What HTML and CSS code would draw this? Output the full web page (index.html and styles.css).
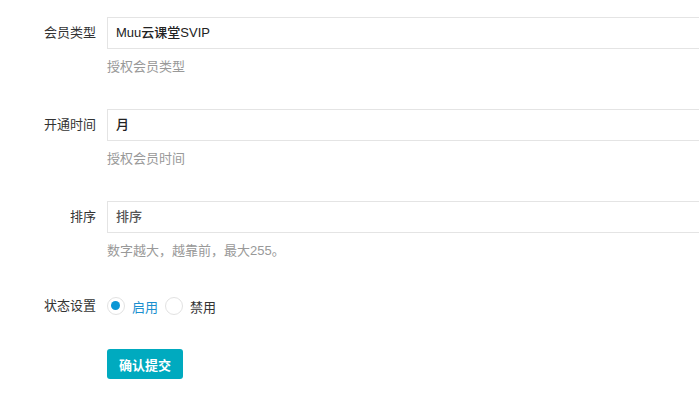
FILE: index.html
```html
<!DOCTYPE html>
<html lang="zh">
<head>
<meta charset="utf-8">
<link rel="stylesheet" href="styles.css">
</head>
<body>
<form class="form">
  <div class="row">
    <label class="label">会员类型</label>
    <div class="field">
      <div class="input">Muu云课堂SVIP</div>
      <div class="help">授权会员类型</div>
    </div>
  </div>
  <div class="row">
    <label class="label">开通时间</label>
    <div class="field">
      <div class="input">月</div>
      <div class="help">授权会员时间</div>
    </div>
  </div>
  <div class="row">
    <label class="label">排序</label>
    <div class="field">
      <div class="input placeholder">排序</div>
      <div class="help">数字越大，越靠前，最大255。</div>
    </div>
  </div>
  <div class="row row-radio">
    <label class="label">状态设置</label>
    <div class="field radios">
      <span class="radio checked"><span class="dot"></span></span>
      <span class="radio-text active">启用</span>
      <span class="radio"></span>
      <span class="radio-text">禁用</span>
    </div>
  </div>
  <div class="row row-btn">
    <span class="label"></span>
    <div class="field">
      <button type="button" class="btn">确认提交</button>
    </div>
  </div>
</form>
</body>
</html>
```
FILE: styles.css
```css
html, body {
  margin: 0;
  padding: 0;
  background: #fff;
}
body {
  font-family: "Liberation Sans", "Noto Sans CJK SC", sans-serif;
  font-size: 13px;
  color: #333;
}
.form {
  padding-top: 17px;
}
.row {
  display: flex;
  align-items: flex-start;
  margin-bottom: 32px;
}
.label {
  width: 96px;
  flex: none;
  text-align: right;
  padding-right: 11px;
  line-height: 32px;
  color: #333;
}
.field {
  flex: 1;
  min-width: 0;
}
.input {
  height: 30px;
  border: 1px solid #e4e4e4;
  border-right: 0;
  padding: 0 8px;
  line-height: 30px;
  color: #222;
  font-weight: 500;
}
.input.placeholder {
  color: #555;
}
.help {
  margin-top: 8px;
  line-height: 20px;
  color: #999;
}
.row-radio {
  margin-bottom: 30px;
  align-items: center;
}
.row-radio .label {
  line-height: 26px;
}
.radios {
  display: flex;
  align-items: center;
  height: 26px;
}
.radio {
  width: 16px;
  height: 16px;
  border: 1px solid #e2e2e2;
  border-radius: 50%;
  display: flex;
  align-items: center;
  justify-content: center;
  box-sizing: content-box;
}
.dot {
  width: 9px;
  height: 9px;
  border-radius: 50%;
  background: #0a97d5;
  margin: -2px 0 0 -2px;
}
.radio-text {
  margin: 0 7px;
  color: #333;
}
.radio-text.active {
  color: #1a8fcf;
}
.btn {
  width: 76px;
  height: 30px;
  border: none;
  border-radius: 3px;
  background: #00aabf;
  color: #fff;
  font-family: "Liberation Sans", "Noto Sans CJK SC", sans-serif;
  font-size: 13px;
  font-weight: 700;
  padding: 0;
  cursor: pointer;
}
```
